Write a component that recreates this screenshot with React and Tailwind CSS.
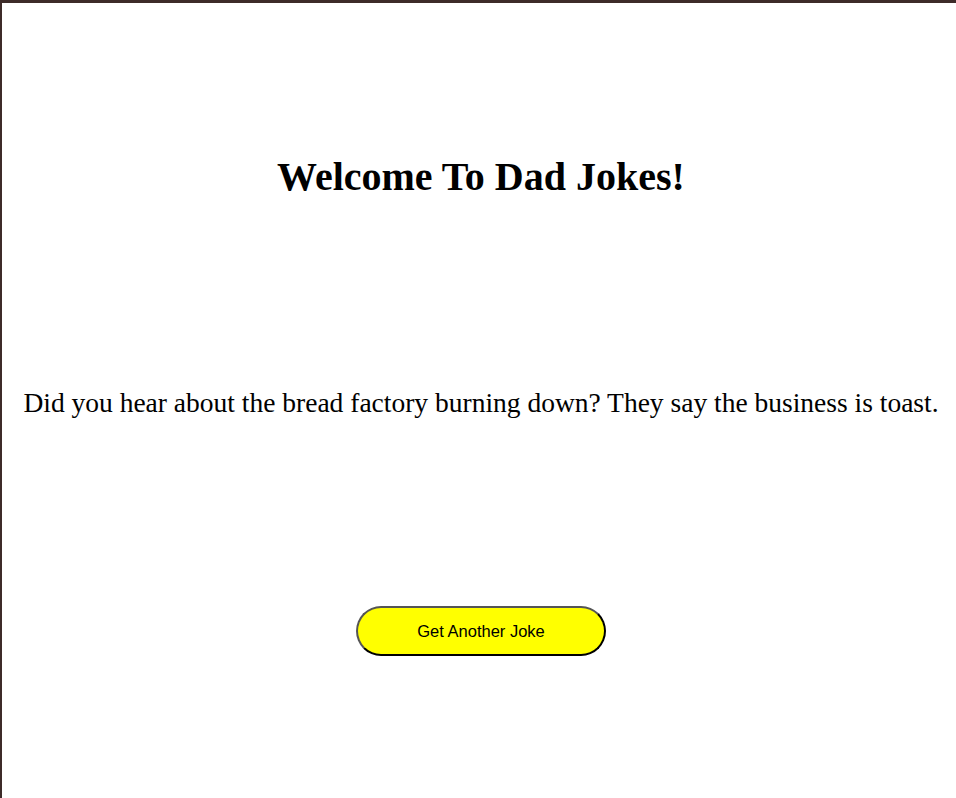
export default function App() {
  return (
    <div className="min-h-[798px] border-t-[3px] border-l-2 border-[#3d2b29] pl-1 bg-white text-black flex flex-col items-center font-['Liberation_Serif',serif]">
      <h1 className="mt-[150px] text-[40px] font-bold leading-[48px]">Welcome To Dad Jokes!</h1>
      <p className="mt-[185px] text-[27.5px] leading-[34px] text-center">
        Did you hear about the bread factory burning down? They say the business is toast.
      </p>
      <button className="mt-[186px] w-[250px] h-[50px] rounded-full bg-[#ffff00] border-2 border-[#555] border-b-black border-r-black font-['Liberation_Sans',sans-serif] text-[16.5px]">
        Get Another Joke
      </button>
    </div>
  )
}
